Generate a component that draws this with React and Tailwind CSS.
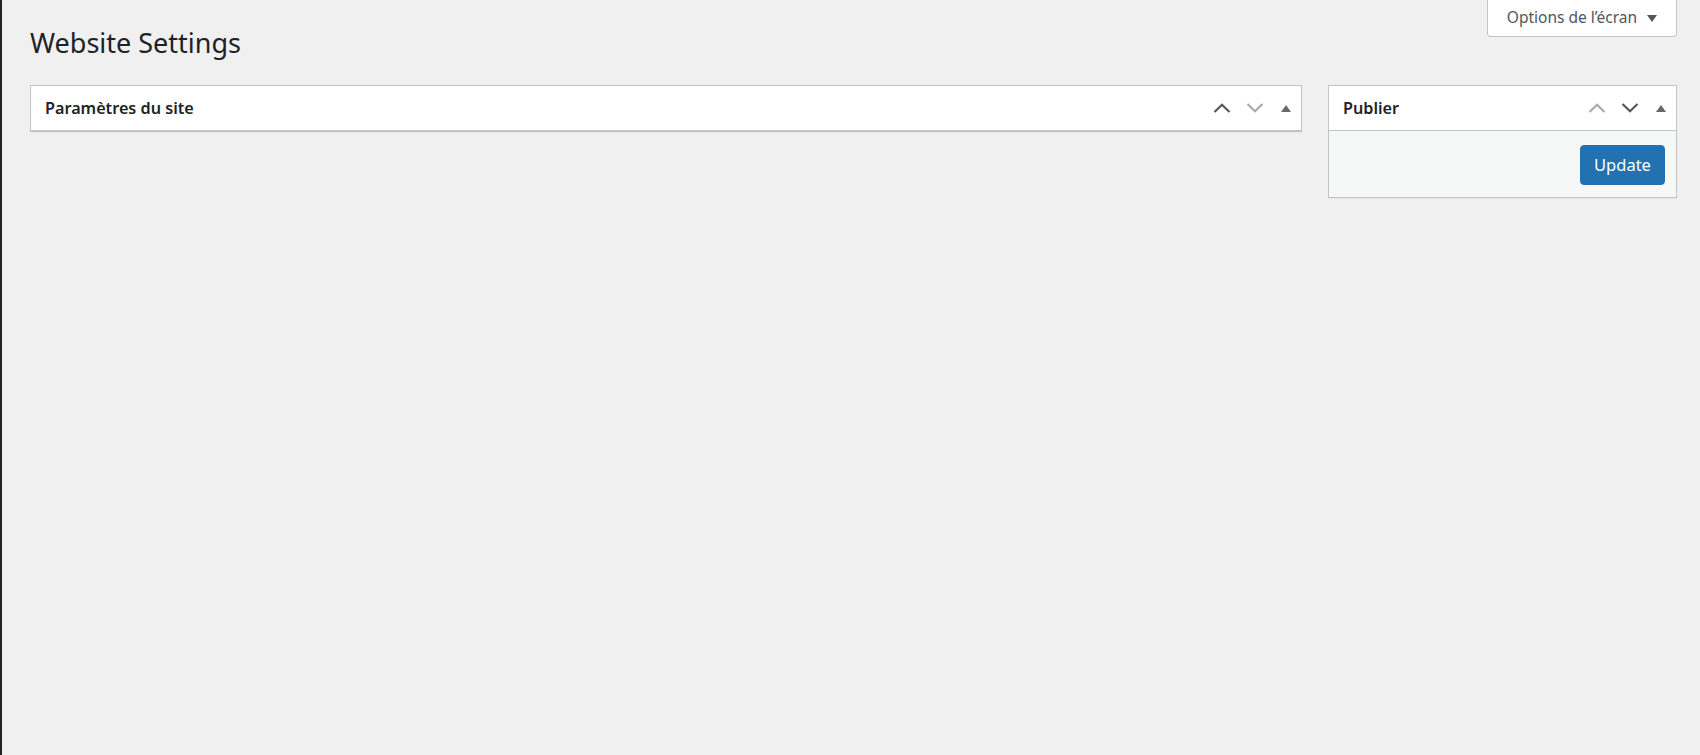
import React from "react";

const font = { fontFamily: '"Noto Sans", "Open Sans", Arial, sans-serif' };

function Chevron({ up = true, light = false }) {
  return (
    <svg width="18" height="10" viewBox="0 0 18 10" className="block">
      <polyline
        points={up ? "1.5,9 9,1.8 16.5,9" : "1.5,1 9,8.2 16.5,1"}
        fill="none"
        stroke={light ? "#a7aaad" : "#50575e"}
        strokeWidth="2.2"
      />
    </svg>
  );
}

function Triangle() {
  return (
    <svg width="10" height="7" viewBox="0 0 10 7" className="block">
      <polygon points="0,7 5,0 10,7" fill="#646970" />
    </svg>
  );
}

function Handles({ upLight, downLight }) {
  return (
    <div className="flex h-full items-center">
      <div className="flex w-[33px] justify-center">
        <Chevron up light={upLight} />
      </div>
      <div className="flex w-[33px] justify-center">
        <Chevron up={false} light={downLight} />
      </div>
      <div className="flex w-[30px] justify-center">
        <Triangle />
      </div>
    </div>
  );
}

function Header({ title, upLight, downLight }) {
  return (
    <div className="flex h-[45px] items-center justify-between border-b border-[#c3c4c7] pl-[14px]">
      <h2 className="text-[16.2px] font-semibold leading-none text-[#1d2327]">{title}</h2>
      <Handles upLight={upLight} downLight={downLight} />
    </div>
  );
}

export default function App() {
  return (
    <div className="flex h-[755px] w-full overflow-hidden bg-[#f0f0f1]" style={font}>
      <div className="w-[2px] shrink-0 bg-[#1d2327]" />
      <div className="flex-1 pl-[28px] pr-[23px]">
        <div className="flex items-start justify-between">
          <h1 className="mt-[25px] text-[27px] font-normal leading-[36px] text-[#1d2327]">
            Website Settings
          </h1>
          <button className="flex h-[37px] w-[190px] items-center justify-center gap-[10px] rounded-b-[4px] border border-t-0 border-[#c3c4c7] bg-white text-[15.5px] text-[#50575e]">
            <span>Options de l’écran</span>
            <svg width="10" height="7" viewBox="0 0 10 7" className="block">
              <polygon points="0,0 10,0 5,7" fill="#50575e" />
            </svg>
          </button>
        </div>
        <div className="mt-[24px] flex items-start gap-[26px]">
          <div className="flex-1 border border-[#c3c4c7] bg-white shadow-[0_1px_1px_rgba(0,0,0,0.04)]">
            <Header title="Paramètres du site" upLight={false} downLight={true} />
          </div>
          <div className="w-[349px] shrink-0 border border-[#c3c4c7] bg-white shadow-[0_1px_1px_rgba(0,0,0,0.04)]">
            <Header title="Publier" upLight={true} downLight={false} />
            <div className="flex justify-end bg-[#f6f7f7] pb-[12px] pr-[11px] pt-[14px]">
              <button className="h-[40px] w-[85px] rounded-[4px] border border-[#2271b1] bg-[#2271b1] text-[16.5px] text-white">
                Update
              </button>
            </div>
          </div>
        </div>
      </div>
    </div>
  );
}
